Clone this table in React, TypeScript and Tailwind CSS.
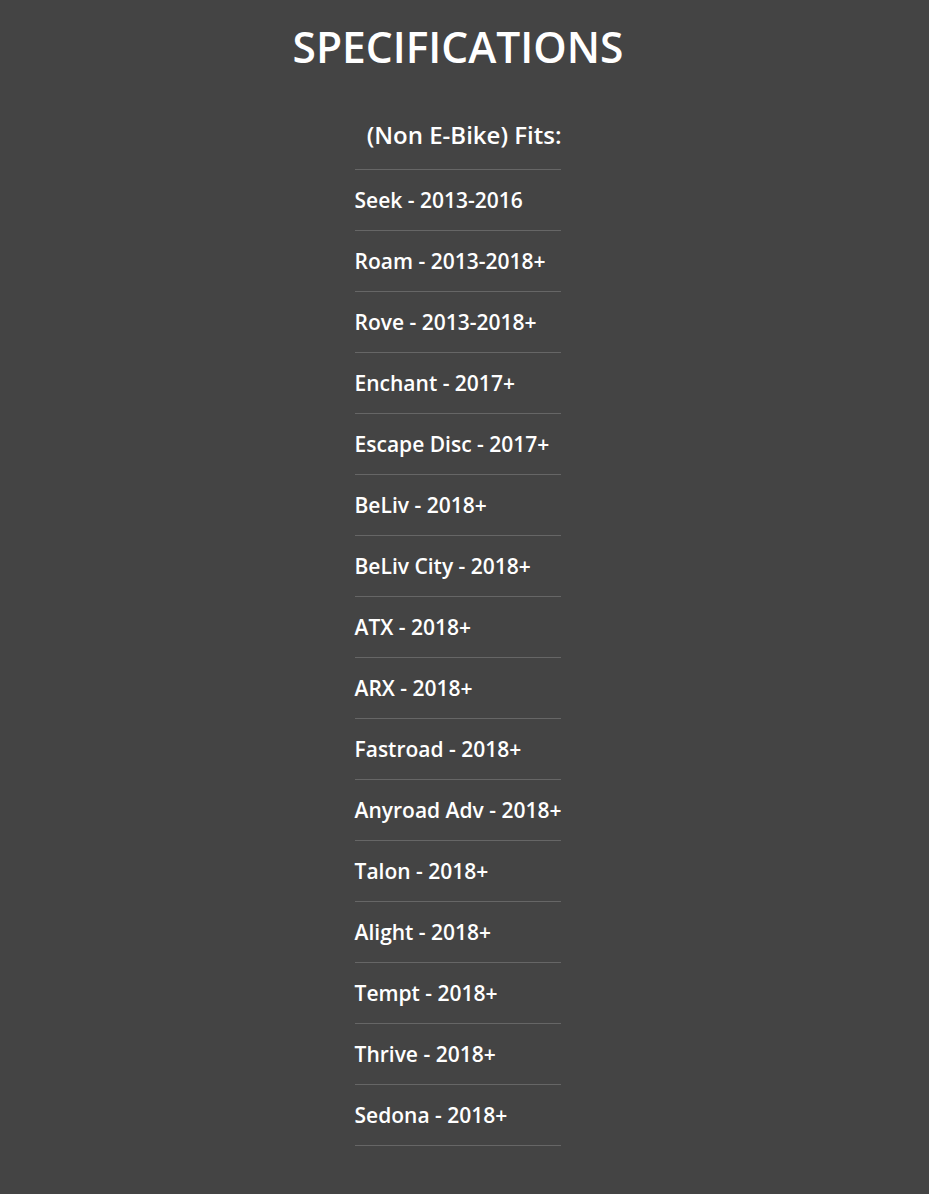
const models = [
  'Seek - 2013-2016',
  'Roam - 2013-2018+',
  'Rove - 2013-2018+',
  'Enchant - 2017+',
  'Escape Disc - 2017+',
  'BeLiv - 2018+',
  'BeLiv City - 2018+',
  'ATX - 2018+',
  'ARX - 2018+',
  'Fastroad - 2018+',
  'Anyroad Adv - 2018+',
  'Talon - 2018+',
  'Alight - 2018+',
  'Tempt - 2018+',
  'Thrive - 2018+',
  'Sedona - 2018+',
];

export default function App() {
  return (
    <div
      className="min-h-[1194px] bg-[#444444] pr-[13px] text-white"
      style={{ fontFamily: '"Open Sans", sans-serif' }}
    >
      {/* Title */}
      <h1 className="pt-[22px] text-center text-[42.5px] font-semibold leading-[50px]">
        SPECIFICATIONS
      </h1>

      {/* Fits list */}
      <div className="flex justify-center pt-[48px]">
        <div className="flex flex-col">
          <h2 className="pb-[19px] text-right text-[24px] font-semibold leading-[30px]">
            (Non E-Bike) Fits:
          </h2>
          <ul className="border-t border-[#666666]">
            {models.map((m) => (
              <li
                key={m}
                className="flex h-[61px] items-center border-b border-[#666666] pt-[2px] text-[21px] font-semibold"
              >
                {m}
              </li>
            ))}
          </ul>
        </div>
      </div>
    </div>
  );
}
